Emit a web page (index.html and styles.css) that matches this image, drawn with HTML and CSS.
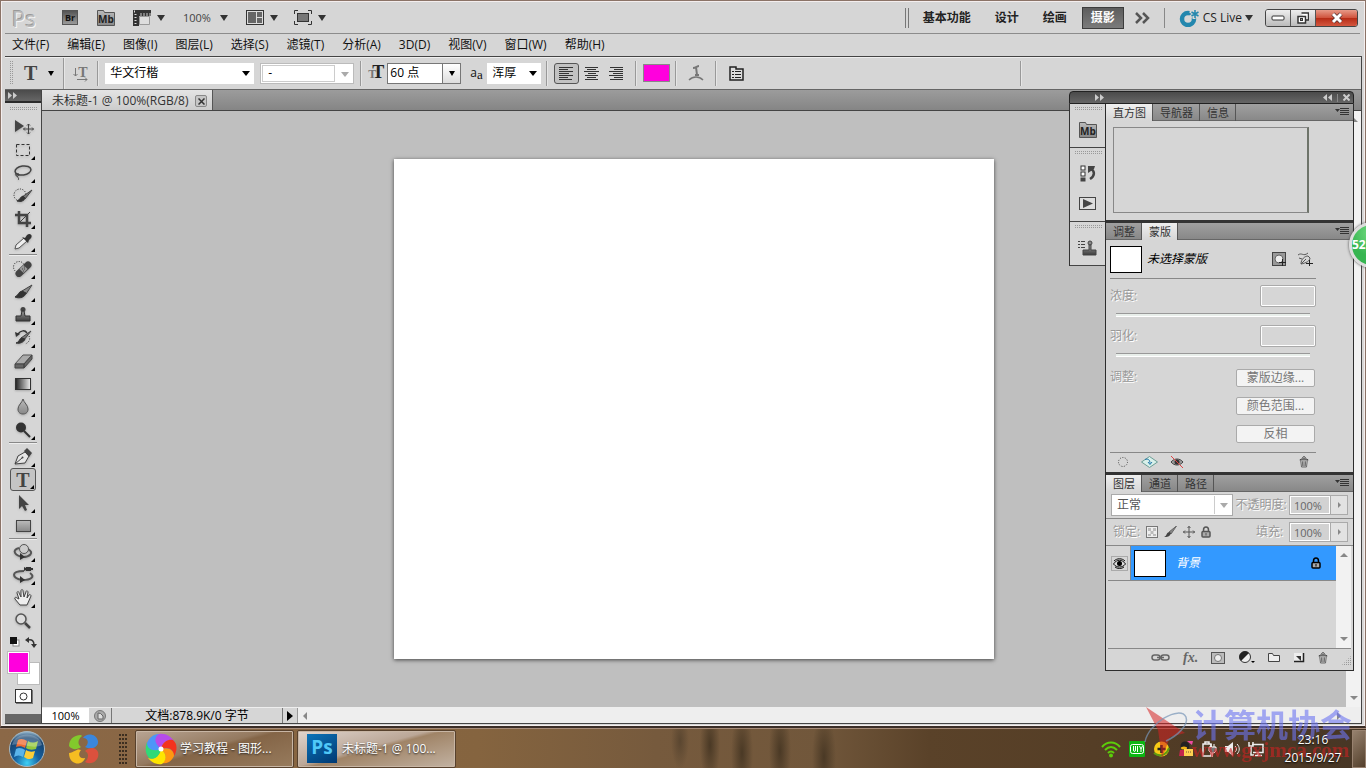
FILE: index.html
```html
<!DOCTYPE html>
<html lang="zh-CN">
<head>
 <meta charset="UTF-8">
 <meta name="viewport" content="width=device-width">
 <title>未标题-1 @ 100%(RGB/8)</title>
 <link rel="stylesheet" href="styles.css">
</head>
<body>
<svg class="defs" aria-hidden="true">
  <defs>
    <linearGradient id="gv" x1="0" y1="0" x2="0" y2="1"><stop offset="0" stop-color="#999"/><stop offset="1" stop-color="#3c3c3c"/></linearGradient>
    <linearGradient id="gl" x1="0" y1="0" x2="0" y2="1"><stop offset="0" stop-color="#bbb"/><stop offset="1" stop-color="#888"/></linearGradient>
    <linearGradient id="gh"><stop offset="0" stop-color="#222"/><stop offset="1" stop-color="#eee"/></linearGradient>
    <radialGradient id="orb" cx=".5" cy=".9" r=".9"><stop offset="0" stop-color="#3fd0f5"/><stop offset=".4" stop-color="#1560a0"/><stop offset=".8" stop-color="#16426e"/><stop offset="1" stop-color="#9dbdd2"/></radialGradient>
    <symbol id="menu" viewBox="0 0 14 10"><path d="M0 2h5l-2.500 3z" fill="#333"/><path d="M5 1.500h9M5 3.500h9M5 5.500h9M5 7.500h9" stroke="#333"/></symbol>
    <symbol id="trash" viewBox="0 0 12 14"><path d="M2 5l1 8h6l1-8M4 6l.5 6M6 6v6M8 6l-.5 6" fill="none" stroke="#555"/><path d="M1 4.500c1-2 9-2 10 0zM4 2c1-2 3-2 4 0" fill="#aaa" stroke="#444"/></symbol>
    <symbol id="lock" viewBox="0 0 12 12"><path d="M3.500 6V4c0-4 5-4 5 0v2" fill="none" stroke="currentColor" stroke-width="1.500"/><rect x="2" y="5.500" width="8" height="5.500" rx="1" fill="#aaa" stroke="currentColor" stroke-width="1.500"/><path d="M6 7v2.500" stroke="currentColor"/></symbol>
    <symbol id="mb" viewBox="0 0 18 16"><path d="M.5 15.500V.5h6l1 2h10v13z" fill="url(#gl)" stroke="#555"/><text x="9" y="12.500" text-anchor="middle" font-size="10" font-weight="bold" fill="#222">Mb</text></symbol>
  </defs>
</svg>

<div class="app">
  <header class="appbar">
    <span class="pslogo">Ps</span>
    <button class="br" aria-label="Bridge">Br</button>
    <button class="flat mbbtn" aria-label="Mini Bridge"><svg width="18" height="16"><use href="#mb"/></svg></button>
    <button class="flat film" aria-label="查看额外内容"><svg width="18" height="16"><path d="M0 0h18v6H6v10H0z" fill="#333"/><path d="M6.500 6.500h10v8h-10z" fill="#ddd" stroke="#999"/><path d="M8 3v3M11 3v3M14 3v3M17 3v3" stroke="#ccc"/><path d="M1 1.500h3M2.500 4v11" stroke="#ddd" stroke-width="2" stroke-dasharray="1 2"/></svg><i class="tri"></i></button>
    <button class="flat zoomlvl">100%<i class="tri"></i></button>
    <button class="flat arrange" aria-label="排列文档"><svg width="18" height="16"><rect x=".5" y=".5" width="17" height="14" fill="#ddd" stroke="#333"/><path d="M2 2h8v11H2zM11 2h5v5h-5zM11 8h5v5h-5z" fill="#666"/></svg><i class="tri"></i></button>
    <button class="flat" aria-label="屏幕模式"><svg width="18" height="16"><rect x="3.500" y="3.500" width="11" height="8" fill="#777" stroke="#333"/><path d="M.5 4V.5H4M14 .5h3.500V4M17.500 11v3.500H14M4 14.500H.5V11" fill="none" stroke="#333"/></svg><i class="tri"></i></button>
    <nav class="spaces">
      <button>基本功能</button><button>设计</button><button>绘画</button><button class="on">摄影</button>
      <button class="more" aria-label="更多"><svg width="15" height="12"><path d="M1 1l5 5-5 5M8 1l5 5-5 5" fill="none" stroke="#555" stroke-width="2.500"/></svg></button>
    </nav>
    <button class="flat cslive"><svg width="20" height="18"><circle cx="9" cy="10" r="6" fill="none" stroke="#2387ae" stroke-width="4.500"/><path d="M15 0v10M11 2l8 6M19 2l-8 6" stroke="#d6d6d6" stroke-width="3"/><path d="M16 1v8M12.500 3l7 4M19.500 3l-7 4" stroke="#2387ae" stroke-width="1.500"/></svg>CS Live<i class="tri"></i></button>
    <div class="winbtns">
      <button aria-label="最小化"><svg width="14" height="8"><rect x="1" y="2" width="12" height="4" rx="1" fill="#fff" stroke="#333"/></svg></button>
      <button aria-label="还原"><svg width="12" height="12"><path d="M4.500 1h7v7h-3M1 4.500h7.500v6.500H1z" fill="#fff" stroke="#333" stroke-width="1.500"/><rect x="3.500" y="6.500" width="2" height="2" fill="#999" stroke="#333"/></svg></button>
      <button class="close" aria-label="关闭"><svg width="14" height="12"><path d="M3 2l8 8M11 2l-8 8" stroke="#533" stroke-width="4.500"/><path d="M3 2l8 8M11 2l-8 8" stroke="#fff" stroke-width="3"/></svg></button>
    </div>
  </header>

  <nav class="menubar">
    <a href="#">文件(F)</a><a href="#">编辑(E)</a><a href="#">图像(I)</a><a href="#">图层(L)</a><a href="#">选择(S)</a><a href="#">滤镜(T)</a><a href="#">分析(A)</a><a href="#">3D(D)</a><a href="#">视图(V)</a><a href="#">窗口(W)</a><a href="#">帮助(H)</a>
  </nav>

  <div class="frame">
  <div class="options">
    <span class="vgrip"></span>
    <button class="flat typebtn" aria-label="文字工具"><b>T</b><i class="tri small"></i></button>
    <i class="rule tall"></i>
    <button class="flat orient" aria-label="切换文本取向"><svg width="18" height="20"><text x="11" y="14" text-anchor="middle" fill="#777">T</text><path d="M3.500 5v8M1.500 11l2 2 2-2M5 16.500h10M13 14.500l2 2-2 2" fill="none" stroke="#777"/></svg></button>
    <i class="rule"></i>
    <span class="sel family"><select aria-label="字体"><option>华文行楷</option></select></span>
    <span class="sel fstyle"><select aria-label="字体样式" disabled><option>-</option></select></span>
    <i class="rule"></i>
    <span class="tt"><small>T</small>T</span>
    <span class="size"><input type="text" value="60 点" aria-label="字号"><button aria-label="选择字号"><i class="tri small"></i></button></span>
    <span class="aa">a<small>a</small></span>
    <span class="sel anti"><select aria-label="消除锯齿"><option>浑厚</option></select></span>
    <i class="rule"></i>
    <div class="aligns">
      <button class="on" aria-label="左对齐"><svg width="15" height="14"><path d="M0 1.500h14M0 3.500h9M0 5.500h14M0 7.500h10M0 9.500h14M0 11.500h9M0 13.500h13" stroke="#333"/></svg></button>
      <button aria-label="居中"><svg width="15" height="14"><path d="M1 1.500h13M3 3.500h9M0 5.500h15M4 7.500h8M1 9.500h13M3 11.500h9M1 13.500h13" stroke="#333"/></svg></button>
      <button aria-label="右对齐"><svg width="15" height="14"><path d="M1 1.500h13M5 3.500h9M0 5.500h14M4 7.500h10M0 9.500h14M5 11.500h9M1 13.500h13" stroke="#333"/></svg></button>
    </div>
    <i class="rule"></i>
    <button class="color" aria-label="文本颜色"></button>
    <i class="rule"></i>
    <button class="flat warp" aria-label="变形文字"><svg width="16" height="18"><path d="M5 4c3 0 4-2 6-2M8 3l1 8M7 11h4" fill="none" stroke="#777" stroke-width="2"/><path d="M1 16c4-4 10-4 14 0" fill="none" stroke="#777" stroke-width="1.500"/></svg></button>
    <i class="rule"></i>
    <button class="flat" aria-label="字符面板"><svg width="15" height="15"><path d="M1 14V1h6v2h7v11z" fill="#ddd" stroke="#222" stroke-width="1.500"/><path d="M3 5.500h2M6 5.500h6M3 8.500h2M6 8.500h6M3 11.500h2M6 11.500h6" stroke="#222"/></svg></button>
    <i class="rule far"></i>
  </div>

  <div class="main">
    <aside class="tools">
      <div class="dhead"><svg width="9" height="7"><path d="M0 0l4 3.500L0 7zM5 0l4 3.500L5 7z" fill="#ccc"/></svg></div>
      <div class="tbody">
        <i class="grip"></i>
        <button aria-label="移动"><svg viewBox="0 0 22 20"><path d="M3 3v12l9-6z" fill="#444"/><path d="M16.500 7v10M11.500 12h10M15 8.500l1.500-1.500L18 8.500M15 15.500l1.500 1.500 1.500-1.500M13 10.500L11.500 12l1.500 1.500M20 10.500l1.500 1.500-1.500 1.500" fill="none" stroke="#444"/></svg></button>
        <button class="sub" aria-label="选框"><svg viewBox="0 0 22 20"><rect x="4.500" y="4.500" width="13" height="11" fill="none" stroke="#333" stroke-dasharray="3 2"/></svg></button>
        <button class="sub" aria-label="套索"><svg viewBox="0 0 22 20"><ellipse cx="11" cy="7.500" rx="8" ry="4.500" transform="rotate(-8 11 7.500)" fill="none" stroke="#444" stroke-width="1.500"/><path d="M4 10c-2 3 2 4 3 2s-4-2-2 1 2 3 1 4" fill="none" stroke="#444"/></svg></button>
        <button class="sub" aria-label="快速选择"><svg viewBox="0 0 22 20"><circle cx="8" cy="9" r="6" fill="none" stroke="#222" stroke-dasharray="1 1.500"/><path d="M20 4l-7 9-3-2z" fill="#777" stroke="#444"/><path d="M13 12c-1 3-4 4-8 3 3-1 3-4 6-5z" fill="#333" stroke="#333"/></svg></button>
        <button class="sub" aria-label="裁剪"><svg viewBox="0 0 22 20"><path d="M7 2v12h12M3 6h12v12" fill="none" stroke="#444" stroke-width="2.500"/><path d="M7 14L18 3" stroke="#444"/></svg></button>
        <button class="sub" aria-label="吸管"><svg viewBox="0 0 22 20"><path d="M3 17l1-4 8-7 3 3-8 7z" fill="#eee" stroke="#555"/><path d="M10 5l6 6 1-3c5-3 2-8-2-5l-2 3z" fill="#333"/></svg></button>
        <hr>
        <button class="sub" aria-label="修复画笔"><svg viewBox="0 0 22 20"><circle cx="7" cy="8" r="5.500" fill="none" stroke="#222" stroke-dasharray="1 1.500"/><path d="M7 14.500l9-8.500" stroke="#444" stroke-width="7" stroke-linecap="round"/><path d="M9.500 12l4-4" stroke="#999" stroke-width="6"/><path d="M10 10h1M12 10h1M11 12h1M12 8h1" stroke="#444"/></svg></button>
        <button class="sub" aria-label="画笔"><svg viewBox="0 0 22 20"><path d="M20 3l-6 9-4-3z" fill="#888" stroke="#444"/><path d="M14 11c-1 4-6 6-11 4 4-2 3-5 7-6z" fill="#333" stroke="#333"/></svg></button>
        <button class="sub" aria-label="仿制图章"><svg viewBox="0 0 22 20"><circle cx="11" cy="4.500" r="2.500" fill="#444"/><path d="M10 6h2l1 5h5v5H4v-5h5z" fill="url(#gv)" stroke="#333"/></svg></button>
        <button class="sub" aria-label="历史记录画笔"><svg viewBox="0 0 22 20"><path d="M19 3l-7 9-3-2z" fill="#777" stroke="#444"/><path d="M13 11c-1 3-5 5-9 4 4-1 3-5 6-5z" fill="#333" stroke="#333"/><path d="M6 6c3-4 7-4 9-1" fill="none" stroke="#333" stroke-width="1.500"/><path d="M3 4l1 5 4-3z" fill="#333"/><path d="M17 8c2 4-1 7-4 8" fill="none" stroke="#333" stroke-dasharray="1 1.500"/></svg></button>
        <button class="sub" aria-label="橡皮擦"><svg viewBox="0 0 22 20"><path d="M3 13l8-9h9l-8 9z" fill="#aaa" stroke="#555"/><path d="M3 13h9v4H3zM12 13l8-9v4l-8 9z" fill="#666" stroke="#444"/></svg></button>
        <button class="sub" aria-label="渐变"><svg viewBox="0 0 22 20"><rect x="3.500" y="4.500" width="15" height="11" fill="url(#gh)" stroke="#333"/></svg></button>
        <button class="sub" aria-label="模糊"><svg viewBox="0 0 22 20"><path d="M11 2c1 4 5 6 5 10s-3 5-5 5-5-1-5-5 4-6 5-10z" fill="url(#gl)" stroke="#555"/></svg></button>
        <button class="sub" aria-label="加深"><svg viewBox="0 0 22 20"><circle cx="9" cy="7.500" r="5" fill="#333"/><path d="M12 11l6 6" stroke="#333" stroke-width="2"/></svg></button>
        <hr>
        <button class="sub" aria-label="钢笔"><svg viewBox="0 0 22 20"><path d="M3 17l3-8 7-4 4 4-4 7z" fill="#e6e6e6" stroke="#444"/><path d="M3 17l7-6" stroke="#444"/><circle cx="10.500" cy="10.500" r="1" fill="#444"/><path d="M12 4l3-3 5 5-3 4z" fill="#444"/></svg></button>
        <button class="sub on" aria-label="文字"><b>T</b></button>
        <button class="sub" aria-label="路径选择"><svg viewBox="0 0 22 20"><path d="M7 2v14l3-3 3 5 2-1-2-5h4z" fill="#444"/></svg></button>
        <button class="sub" aria-label="矩形"><svg viewBox="0 0 22 20"><rect x="4.500" y="4.500" width="14" height="11" fill="url(#gl)" stroke="#444"/></svg></button>
        <hr class="slim">
        <button class="sub" aria-label="3D 旋转"><svg viewBox="0 0 22 20"><path d="M7 6c-8 2-4 8 4 9M16 7c7 4 1 8-5 8" fill="none" stroke="#555" stroke-width="2"/><path d="M8 11l5 4-5 3z" fill="#333"/><circle cx="12" cy="7" r="4.500" fill="#ccc" stroke="#555"/></svg></button>
        <button class="sub" aria-label="3D 相机"><svg viewBox="0 0 22 20"><path d="M12 6C-2 6 0 13 10 15M18 8c6 4 0 7-7 7" fill="none" stroke="#555" stroke-width="2"/><path d="M8 11l5 4-5 3zM14 2h5v4h-5zM12 2l2 1v2l-2 1zM19 3h2v2h-2z" fill="#333"/></svg></button>
        <button class="sub" aria-label="抓手"><svg viewBox="0 0 22 20"><path d="M8 17L3 11c-1-2 1-2 2-1l2 1-2-6c0-2 2-2 2 0l2 4V3c0-2 2-2 2 0l1 6 2-5c0-2 2-1 2 0l-1 6 2-3c1-1 2 0 2 1l-4 9z" fill="#eee" stroke="#444"/></svg></button>
        <button aria-label="缩放"><svg viewBox="0 0 22 20"><circle cx="9" cy="8" r="5" fill="#ddd" stroke="#555" stroke-width="1.500"/><path d="M13 12l5 5" stroke="#444" stroke-width="2.500"/></svg></button>
        <div class="swap"><svg width="10" height="10"><rect x="3" y="3" width="6" height="6" fill="#fff" stroke="#888"/><rect width="7" height="7" fill="#111"/></svg><svg width="12" height="11"><path d="M3 3c4-1 6 1 6 5" fill="none" stroke="#333" stroke-width="1.500"/><path d="M0 3l4-3v6zM6 7h6l-3 4z" fill="#333"/></svg></div>
        <div class="fgbg"><button class="bg" aria-label="背景色"></button><button class="fg" aria-label="前景色"></button></div>
        <button class="qmask" aria-label="快速蒙版"><svg width="9" height="9"><circle cx="4.500" cy="4.500" r="3.500" fill="#fff" stroke="#333"/></svg></button>
      </div>
    </aside>

    <section class="doc">
      <div class="doctabs"><div class="doctab">未标题-1 @ 100%(RGB/8)<button aria-label="关闭文档"><svg width="7" height="7"><path d="M.5.5l6 6M6.500.5l-6 6" stroke="#333" stroke-width="1.500"/></svg></button></div></div>
      <div class="view">
        <div class="stage"><div class="paper"></div></div>
        <div class="vscroll"><i class="up"></i><i class="down"></i></div>
      </div>
      <footer class="status">
        <input type="text" class="pct" value="100%" aria-label="缩放比例">
        <span class="ver"><svg width="12" height="12"><circle cx="6" cy="6" r="5.500" fill="#aaa" stroke="#777"/><path d="M4 3v6h5V6L6.500 3.500z" fill="#ddd" stroke="#666"/></svg></span>
        <span class="info">文档:878.9K/0 字节</span>
        <button class="flat play" aria-label="显示"><svg width="6" height="10"><path d="M0 0l6 5-6 5z"/></svg></button>
        <div class="hscroll"><i class="left"></i><i class="right"></i></div>
      </footer>
    </section>

    <div class="dock">
      <div class="dhead"><svg class="first" width="9" height="7"><path d="M0 0l4 3.500L0 7zM5 0l4 3.500L5 7z" fill="#ccc"/></svg><svg width="9" height="7"><path d="M4 0L0 3.500 4 7zM9 0L5 3.500 9 7z" fill="#ccc"/></svg><i></i><svg width="7" height="7"><path d="M.5.5l6 6M6.500.5l-6 6" stroke="#ccc" stroke-width="2"/></svg></div>
      <div class="cols">
        <div class="icons">
          <div class="grp"><i class="grip"></i><button aria-label="Mini Bridge"><svg width="18" height="16"><use href="#mb"/></svg></button></div>
          <div class="grp"><i class="grip"></i>
            <button aria-label="历史记录"><svg width="16" height="17"><rect x="1" y="1" width="4" height="4" fill="#fff" stroke="#333"/><rect x="1" y="7" width="4" height="4" fill="#fff" stroke="#333"/><path d="M.5 12.500h5v4h-5z" fill="#444"/><path d="M11 4c4 2 4 7-1 10" fill="none" stroke="#444" stroke-width="2.500"/><path d="M8 1h7l-1 3-6 4z" fill="#444"/></svg></button>
            <button aria-label="动作"><svg width="18" height="14"><rect x=".5" y=".5" width="16" height="12" fill="#ddd" stroke="#444"/><path d="M4 2l10 4.500L4 11z" fill="#444"/></svg></button></div>
          <div class="grp"><i class="grip"></i><button aria-label="仿制源"><svg width="19" height="16"><path d="M0 1.500h2M3 1.500h4M0 4.500h2M3 4.500h4M0 7.500h2M3 7.500h4" stroke="#444"/><circle cx="12" cy="3" r="2" fill="#888" stroke="#444"/><path d="M11 5h2v5h5v5H5v-5h6z" fill="url(#gv)" stroke="#444"/></svg></button></div>
        </div>
        <div class="panels">
          <section class="panel histo">
            <div class="tabs"><button class="on">直方图</button><button>导航器</button><button>信息</button><svg width="14" height="10"><use href="#menu"/></svg></div>
            <div class="graph"></div>
          </section>
          <section class="panel masks">
            <div class="tabs"><button>调整</button><button class="on">蒙版</button><svg width="14" height="10"><use href="#menu"/></svg></div>
            <div class="mbody">
              <div class="mhead"><span class="thumb"></span><em>未选择蒙版</em>
                <svg width="15" height="15"><rect x=".5" y=".5" width="13" height="13" fill="#999" stroke="#444"/><circle cx="7" cy="7" r="4" fill="#eee" stroke="#666"/><path d="M10.500 7v7M7 10.500h7" stroke="#222"/></svg>
                <svg width="15" height="15"><path d="M0 3c4-3 5 2 10-2M3 12c0-5 4-8 7-8l2 2c0 3-4 5-9 6zM3 12l5-5M1 6l3 1" fill="none" stroke="#555"/><path d="M11.500 8v6M8 11.500h7" stroke="#222"/></svg></div>
              <div class="prop"><label for="dens">浓度:</label><input id="dens" type="text" disabled></div>
              <input type="range" aria-label="浓度" disabled>
              <div class="prop"><label for="feat">羽化:</label><input id="feat" type="text" disabled></div>
              <input type="range" aria-label="羽化" disabled>
              <div class="refine"><span>调整:</span><div><button disabled>蒙版边缘...</button><button disabled>颜色范围...</button><button disabled>反相</button></div></div>
              <div class="mfoot">
                <svg width="12" height="12"><circle cx="6" cy="6" r="4.500" fill="none" stroke="#444" stroke-dasharray="1 1.500"/></svg>
                <svg width="17" height="12"><path d="M8.500.5l8 5.500-8 5.500L.5 6z" fill="#d9f0ea" stroke="#6a9c94"/><path d="M4 3.500c3-1 5 0 5 4M7 6l2 2.500L11 6" fill="none" stroke="#2277aa"/></svg>
                <svg width="14" height="12"><path d="M1 6c3-4 9-4 12 0-3 4-9 4-12 0z" fill="#999" stroke="#444"/><circle cx="7" cy="6" r="2.500" fill="#333"/><path d="M1 0l12 12" stroke="#d44"/></svg>
                <svg class="end" width="10" height="12"><use href="#trash"/></svg>
              </div>
            </div>
          </section>
          <section class="panel layers">
            <div class="tabs"><button class="on">图层</button><button>通道</button><button>路径</button><svg width="14" height="10"><use href="#menu"/></svg></div>
            <div class="lrow"><span class="sel blend"><select aria-label="混合模式" disabled><option>正常</option></select></span><label for="op">不透明度:</label><span class="num"><input id="op" type="text" value="100%" disabled><button aria-label="不透明度滑块" disabled></button></span></div>
            <div class="lrow"><span class="dim lk">锁定:</span>
              <svg width="12" height="12"><rect x=".5" y=".5" width="11" height="11" fill="#eee" stroke="#777"/><path d="M2 2h3v3H2zM7 2h3v3H7zM4.500 5h3v3h-3zM2 8h3v2H2zM7 8h3v2H7z" fill="#bbb"/></svg>
              <svg width="13" height="12"><path d="M12.500 0L7 8 5 6z" fill="#888" stroke="#666"/><path d="M7 7c-1 4-4 4-7 4 3-1 2-4 5-5z" fill="#444"/></svg>
              <svg width="12" height="12"><path d="M6 0v12M0 6h12M4.500 2L6 .5 7.500 2M4.500 10L6 11.500 7.500 10M2 4.500L.5 6 2 7.500M10 4.500L11.500 6 10 7.500" fill="none" stroke="#555"/></svg>
              <svg class="lk2" width="12" height="12"><use href="#lock"/></svg>
              <label for="fill" class="push">填充:</label><span class="num"><input id="fill" type="text" value="100%" disabled><button aria-label="填充滑块" disabled></button></span></div>
            <div class="list">
              <div class="rows"><div class="layer">
                <button class="eye" aria-label="可见性"><svg width="13" height="11"><path d="M.5 6c3-5 9-5 12 0-3 4-9 4-12 0z" fill="#ddd" stroke="#111"/><circle cx="6.500" cy="5.500" r="2.500"/><path d="M1 3c3-3 8-3 11 0M2 9c2 2 7 2 9 0" fill="none" stroke="#111"/></svg></button>
                <div class="lname"><span class="thumb"></span><em>背景</em><svg width="12" height="12"><use href="#lock"/></svg></div>
              </div></div>
              <div class="lscroll"><i class="up"></i><i class="down"></i></div>
            </div>
            <div class="lfoot">
              <svg width="19" height="10"><rect x="1" y="2" width="8" height="5" rx="2.500" fill="none" stroke="#666" stroke-width="1.500"/><rect x="10" y="2" width="8" height="5" rx="2.500" fill="none" stroke="#666" stroke-width="1.500"/><path d="M6 4.500h7" stroke="#666" stroke-width="1.500"/></svg>
              <span class="fx">fx.</span>
              <svg width="15" height="12"><rect x=".5" y=".5" width="13" height="11" fill="#bbb" stroke="#555"/><circle cx="7" cy="6" r="3.500" fill="#eee" stroke="#777"/></svg>
              <svg width="16" height="13"><circle cx="6" cy="6" r="5.500" fill="#eee" stroke="#333"/><path d="M10 2L2 10A5.500 5.500 0 0 1 10 2z" fill="#222"/><path d="M12 10h4l-2 2z"/></svg>
              <svg width="12" height="10"><path d="M.5 8.500v-8h4l1 2h6v6z" fill="#eee" stroke="#444"/></svg>
              <svg width="12" height="11"><path d="M1 1h9v8H1z" fill="#eee"/><path d="M1 9.500h9.500V1" fill="none" stroke="#222" stroke-width="1.500"/><path d="M3 4h5v5z" fill="#333"/></svg>
              <svg width="10" height="12"><use href="#trash"/></svg>
              <i class="resize"></i>
            </div>
          </section>
        </div>
      </div>
    </div>
  </div>
  </div>
  <div class="speed">52</div>
</div>

<div class="taskbar">
  <button class="start" aria-label="开始"><svg width="38" height="38"><circle cx="19" cy="19" r="17.500" fill="url(#orb)" stroke="#a5b9c4"/><path d="M10 10c3-2 6-1 9 1l-2 7c-3-2-6-2-9-1z" fill="#ee6a30"/><path d="M20 11c3 2 6 2 10 0l-2 8c-4 1-7 1-10-1z" fill="#94c83d"/><path d="M8 19c3-2 6-1 9 1l-2 7c-3-2-6-2-9 0z" fill="#5ab4ea"/><path d="M18 20c3 2 6 2 9 1l-2 7c-4 2-6 1-9-1z" fill="#fccd38"/><path d="M4 15C7 1 31 1 34 15 24 20 14 12 4 15z" fill="#fff" opacity=".25"/></svg></button>
  <button class="quick" aria-label="浏览器"><svg width="30" height="30"><path d="M12 1C4 1 0 6 0 12c3 4 8 4 12 1-3-2-4-7 1-11z" fill="#82c92c"/><path d="M14 4c6 0 6 6 2 9 5 3 14 1 13-6C27-1 17-1 14 4z" fill="#3b87dc"/><path d="M0 19c0 13 14 13 16 5-5 1-8-3-4-8-4-2-6 2-12 3z" fill="#f5bd22"/><path d="M29 18c-3-6-9-4-13-1 4 2 4 7 0 11 8 4 15-3 13-10z" fill="#dc513d"/></svg></button>
  <span class="dots"></span>
  <button class="task"><svg width="32" height="32" viewBox="-16 -16 32 32"><path d="M0 0C-8-5-10-13-2-15 5-16 10-12 13-8 8-10 2-8 0 0z" fill="#b64bea"/><path d="M0 0C2-9 9-10 12-9 17-5 16 2 13 7 13 1 8-3 0 0z" fill="#f3331d"/><path d="M0 0C9-2 13 2 13 7 10 13 6 15 1 14 6 11 6 5 0 0z" fill="#ff9711"/><path d="M0 0C7 6 5 12 1 15-5 16-10 13-13 9-7 11-2 8 0 0z" fill="#ffe500"/><path d="M0 0C-2 9-8 11-12 9-16 4-16-1-14-7-13-1-8 3 0 0z" fill="#30d977"/><path d="M0 0C-8 3-14 0-14-6-12-11-8-15-2-15-8-11-6-5 0 0z" fill="#4c96f8"/><circle r="2.500" fill="#fff"/></svg>学习教程 - 图形...</button>
  <button class="task lit"><span class="psicon">Ps</span>未标题-1 @ 100...</button>
  <div class="tray">
    <svg width="20" height="18"><path d="M1 7c5-6 13-6 18 0M4 10c4-4 8-4 12 0M7 13c2-2 4-2 6 0" fill="none" stroke="#5cce0a" stroke-width="2"/><circle cx="10" cy="15.500" r="2" fill="#5cce0a"/></svg>
    <svg width="16" height="16"><rect width="16" height="16" rx="1" fill="#0db613"/><rect x="1.500" y="3.500" width="13" height="9" rx="2" fill="none" stroke="#fff"/><path d="M4.500 5v4c0 2 2 2 2 0V5M8.500 5v6M10.500 5l1.500 3 1.500-3M12 8v3" fill="none" stroke="#fff"/></svg>
    <svg width="17" height="16"><circle cx="8.500" cy="8" r="7.500" fill="#f7c915"/><path d="M1 12C9 18 15 11 16 7" fill="none" stroke="#5f9b11" stroke-width="2"/><path d="M8.500 4v8M4.500 8h8" stroke="#222" stroke-width="2.500"/></svg>
    <svg width="16" height="17"><circle cx="7" cy="6" r="4.500" fill="#222"/><ellipse cx="6" cy="8" rx="3" ry="1.500" fill="#f3b615"/><path d="M2 10l10 0-2 6H1z" fill="#c2264d"/><path d="M6 9h9v7H6z" fill="#ffd051"/><path d="M8 12h1M10 12h1M12 12h1" stroke="#753"/><path d="M9 1l5 4 1-4z" fill="#ef4ba2"/></svg>
    <svg width="15" height="16"><path d="M1 3h8v12H1zM3 1h4v2H3z" fill="none" stroke="#eee" stroke-width="1.500"/><path d="M7 6h7v4l-2 2H9L7 10zM9 3v3M12 3v3M10.500 12v4" fill="#777" stroke="#fff"/></svg>
    <svg width="15" height="16"><path d="M0 5h3l5-4v14l-5-4H0z" fill="#eee"/><path d="M10 5c2 2 2 4 0 6M12 3c3 3 3 7 0 10" fill="none" stroke="#eee"/></svg>
    <svg width="16" height="16"><path d="M4 3.500h11v8H5M7 14.500h7M10 12v2" fill="#443425" stroke="#eee" stroke-width="1.500"/><path d="M1 1v4h4V1M3 5v9h3" fill="none" stroke="#eee" stroke-width="1.500"/></svg>
    <div class="clock">23:16<br>2015/9/27</div>
    <button class="peek" aria-label="显示桌面"></button>
  </div>
  <div class="mark"><svg width="48" height="56"><path d="M2 1l39 26-15 4-8 21-4-28z" fill="#d52222" opacity=".55"/><path d="M1 36C4 17 36-1 42 11c3 8-9 19-20 24" fill="none" stroke="#7895b8" stroke-width="1.500" opacity=".7"/></svg><div><b>计算机协会</b><span>www.gxjmca.com</span></div></div>
</div>
</body>
</html>
```
FILE: styles.css
```css
* { box-sizing: border-box; }
body { margin: 0; height: 100vh; display: flex; flex-direction: column; overflow: hidden;
  background: #6a5037; color: #222; font: 12px/16px "Open Sans", "Noto Sans CJK SC", sans-serif; }
button, input, select { font: inherit; color: inherit; margin: 0; padding: 0; border-radius: 0; }
button { border: 0; background: none; display: flex; align-items: center; justify-content: center; }
a { color: inherit; text-decoration: none; }
svg { display: block; flex: none; }
svg text { font-family: "Open Sans", sans-serif; }
.defs { position: absolute; width: 0; height: 0; }

.app { flex: 1; min-height: 0; display: flex; flex-direction: column; position: relative;
  background: #d6d6d6; border: 1px solid #8b7367; border-bottom: 2px solid #3a2d27;
  padding: 1px 3px 2px 4px; box-shadow: inset 0 0 0 1px #f4eeee; }
.tri { width: 0; height: 0; border: 4px solid transparent; border-top: 6px solid #333; border-bottom: 0; }
.tri.small { border-width: 5px 3px 0; border-top-color: #000; }

/* application bar */
.appbar { height: 32px; flex: none; display: flex; align-items: center; padding: 0 2px 0 7px;
  border-bottom: 1px solid #8c8c8c; margin-right: 2px; }
.pslogo { width: 50px; font-size: 22px; line-height: 28px; color: #bbb; text-shadow: 1px 1px #f5f5f5, -1px -1px #999; }
.br { width: 16px; height: 15px; background: linear-gradient(#555, #999); border: 1px solid #555;
  font-size: 9px; font-weight: bold; color: #111; }
.flat { gap: 6px; }
.mbbtn { margin: 0 18px 0 19px; }
.film { margin-right: 18px; }
.zoomlvl { gap: 9px; font-size: 11px; color: #444; margin-right: 18px; }
.arrange { margin-right: 16px; }
.spaces { margin-left: auto; display: flex; align-items: center; height: 20px; padding-left: 5px;
  border-left: 1px solid #777; box-shadow: inset 2px 0 #d6d6d6, inset 3px 0 #777; font-weight: bold; }
.spaces button { padding: 0 12px; height: 22px; }
.spaces .on { background: linear-gradient(#5d5d5d, #7b7b7b); color: #fff; border: 1px solid #3c3c3c; padding: 0 8px; margin: 0 3px; }
.spaces .more { padding: 0 8px; }
.cslive { gap: 3px; margin-left: 6px; padding: 0 12px 0 14px; border-left: 1px solid #888; height: 20px; }
.cslive svg { margin-right: 1px; }
.winbtns { display: flex; height: 18px; border: 1px solid #444; border-radius: 3px; overflow: hidden; }
.winbtns button { width: 25px; background: linear-gradient(#eee, #bbb); border-right: 1px solid #555; }
.winbtns .close { width: 41px; border: 0; background: linear-gradient(#e79a88, #d0543e 48%, #b52b15 50%, #d4573f); }

.menubar { height: 22px; flex: none; display: flex; align-items: center; gap: 18px; padding-left: 7px; color: #111; }

.frame { flex: 1; min-height: 0; display: flex; flex-direction: column; border: 1px solid #444; border-left: 0; }

/* options bar */
.options { height: 33px; flex: none; display: flex; align-items: center; padding-left: 4px; border-bottom: 1px solid #666;
  box-shadow: inset 0 1px #eee; }
.vgrip { width: 4px; height: 24px; background: conic-gradient(#999 25%, transparent 0) 0 0 / 2px 2px; }
.rule { width: 1px; height: 25px; background: #999; box-shadow: 1px 0 #e6e6e6; }
.rule.tall { height: 31px; }
.rule.far { margin-left: 276px; }
.typebtn { gap: 11px; padding: 0 9px 0 11px; }
.typebtn b, .tools b { font: bold 20px/20px "Liberation Serif", serif; color: #444; }
.orient { width: 33px; }
.orient text { font: bold 14px "Liberation Serif", serif; }
.sel { position: relative; display: flex; background: #fff; height: 21px; }
.sel select { appearance: none; width: 100%; border: 0; background: none; padding-left: 5px; color: #000; opacity: 1; }
.sel::after { content: ""; position: absolute; right: 4px; top: 8px; border: 4px solid transparent;
  border-top: 5px solid #000; border-bottom: 0; pointer-events: none; }
.family { width: 149px; margin: 0 6px 0 7px; }
.fstyle { width: 94px; margin-right: 6px; border: 1px solid #bbb; box-shadow: inset 0 0 0 1px #fff, inset -18px 0 #fff, inset -19px 0 #ccc, inset 0 0 0 2px #ccc; }
.fstyle select { padding-left: 7px; }
.fstyle::after, .blend::after { border-top-color: #aaa; }
.tt { width: 26px; padding-left: 7px; font: bold 18px/20px "Liberation Serif", serif; white-space: nowrap; }
.tt small { font-size: 12px; color: #777; margin-right: -4px; }
.size { display: flex; height: 21px; }
.size input { width: 55px; border: 1px solid #777; border-right: 0; padding: 0 2px; background: #fff; color: #000; }
.size button { width: 19px; border: 1px solid #777; background: linear-gradient(#fff, #ddd); }
.aa { width: 26px; padding-left: 9px; font-size: 12px; white-space: nowrap; color: #111; }
.aa small { font: 13px "Liberation Serif", serif; position: relative; top: 2px; }
.anti { width: 54px; margin-right: 5px; }
.aligns { display: flex; padding: 0 6px 0 7px; }
.aligns button { width: 25px; height: 21px; }
.aligns .on { border: 1px solid #555; border-radius: 3px; background: #c2c2c2; }
.color { width: 27px; height: 18px; background: #f0d; border: 1px solid #888; margin: 0 5px 0 7px; }
.warp { width: 39px; }
.warp + .rule { margin-right: 13px; }

.main { flex: 1; min-height: 0; display: flex; position: relative; }
.dhead { height: 13px; display: flex; align-items: center; background: linear-gradient(#4a4a4a, #666); border-bottom: 2px solid #2b2b2b; }
.grip { display: block; height: 4px; width: 28px; flex: none; background: conic-gradient(#999 25%, transparent 0) 0 0 / 2px 2px; }

/* toolbox */
.tools { width: 37px; flex: none; background: #666; border-right: 1px solid #444; display: flex; flex-direction: column; }
.tools .dhead { padding-left: 3px; }
.tbody { background: #d6d6d6; padding: 4px 5px 11px; display: flex; flex-direction: column; align-items: center; }
.tbody .grip { margin-bottom: 4px; }
.tbody > button { width: 26px; height: 23px; position: relative; flex: none; }
.tbody > button svg { width: 22px; height: 20px; filter: drop-shadow(0 1px 1px #aaa); }
.tbody .sub::after { content: ""; position: absolute; right: 1px; bottom: 1px;
  border: 2px solid #000; border-top-color: transparent; border-left-color: transparent; }
.tbody .on { border: 1px solid #555; border-radius: 3px; background: #c4c4c4; }
.tbody hr { width: 28px; height: 2px; margin: 1px 0; border: 0; border-top: 1px solid #888; border-bottom: 1px solid #eee; flex: none; }
.tbody .slim { margin-bottom: 0; }
.swap { display: flex; justify-content: space-between; width: 27px; margin: 5px 0 4px; }
.fgbg { display: grid; width: 31px; height: 32px; }
.fgbg button { grid-area: 1 / 1; width: 21px; height: 21px; border: 1px solid #fff; outline: 1px solid #bbb; }
.fg { background: #f0d; z-index: 1; }
.bg { background: #fff; justify-self: end; align-self: end; }
.tbody .qmask { width: 17px; height: 14px; margin-top: 5px; background: #fff; border: 1px solid #333; box-shadow: 1px 1px #777; }
.tbody .qmask svg { width: 9px; height: 9px; filter: none; }

/* document */
.doc { flex: 1; min-width: 0; display: flex; flex-direction: column; }
.doctabs { height: 21px; flex: none; display: flex; background: linear-gradient(#9c9c9c, #858585); border-bottom: 1px solid #444; }
.doctab { display: flex; align-items: center; gap: 7px; padding: 2px 5px 0 10px; background: linear-gradient(#e4e4e4, #ccc); border-right: 1px solid #555; color: #333; }
.doctab button { width: 12px; height: 12px; border: 1px solid #888; background: #c6c6c6; border-radius: 2px; }
.view { flex: 1; min-height: 0; display: flex; background: #bfbfbf; }
.stage { flex: 1; display: flex; align-items: center; justify-content: center; }
.paper { width: 600px; height: 500px; background: #fff; box-shadow: 0 1px 4px #444; }
.vscroll, .lscroll { width: 15px; background: #f2f2f2; display: flex; flex-direction: column; justify-content: space-between; align-items: center; padding: 7px 0; }
.up, .down { border: 4px solid transparent; border-bottom: 4px solid #888; border-top: 0; }
.down { border-bottom: 0; border-top: 4px solid #888; }
.status { height: 16px; flex: none; display: flex; background: #d6d6d6; color: #000; border-top: 1px solid #eee; }
.pct { width: 47px; border: 0; background: #fff; text-align: center; font-size: 11px; }
.ver { width: 23px; display: flex; align-items: center; justify-content: center; border-right: 1px solid #777; }
.info { width: 171px; text-align: center; line-height: 16px; border-right: 1px solid #777; }
.play { width: 15px; border-right: 1px solid #999; }
.hscroll { flex: 1; display: flex; align-items: center; justify-content: space-between; padding: 0 20px 0 5px; background: #eee; }
.left, .right { border: 4px solid transparent; border-right: 4px solid #888; border-left: 0; }
.right { border-right: 0; border-left: 4px solid #888; }

/* floating panels */
.dock { position: absolute; top: 1px; right: 7px; width: 285px; }
.dock .dhead { border: 1px solid #222; border-radius: 4px 4px 0 0; gap: 5px; padding: 0 3px 0 25px; }
.dhead .first { margin-right: auto; }
.dhead i { width: 1px; height: 8px; background: #888; }
.cols { display: flex; align-items: flex-start; }
.icons { width: 36px; background: #d6d6d6; border-left: 1px solid #333; }
.grp { border-bottom: 1px solid #444; padding: 3px 4px; display: flex; flex-direction: column; gap: 1px; }
.grp .grip { margin-bottom: 3px; }
.grp button { height: 29px; }
.panels { flex: 1; border: 1px solid #2c2c2c; border-top: 0; background: #d6d6d6; }
.panel { border-bottom: 3px solid #333; }
.panel:last-child { border-bottom: 0; }
.tabs { display: flex; height: 17px; background: linear-gradient(#a0a0a0, #888); border-bottom: 1px solid #666; font-size: 11px; color: #333; align-items: center; }
.tabs button { padding: 2px 6px 0 7px; height: 17px; border-right: 1px solid #555; color: #333; }
.tabs .on { background: linear-gradient(#efefef, #d6d6d6); }
.tabs svg { margin: 0 4px 0 auto; }
.graph { height: 86px; width: 196px; margin: 6px 0 7px 7px; border: 1px solid #888; border-right: 2px solid #6e746a; }
.mbody { width: 210px; padding-left: 4px; }
.thumb { width: 32px; height: 27px; background: #fff; border: 1px solid #000; flex: none; }
.mhead { height: 39px; display: flex; align-items: center; gap: 11px; border-bottom: 1px solid #888; padding-right: 3px; }
.mhead em { margin: 0 auto 0 -6px; color: #000; }
.prop { height: 34px; display: flex; align-items: center; justify-content: space-between; }
.prop label, .refine span, .lrow { color: #999; text-shadow: 1px 1px #fff; }
.prop input { width: 56px; height: 22px; border: 1px solid #aaa; background: none; border-radius: 2px; box-shadow: inset 0 0 0 1px #fff; }
.mbody input[type=range] { appearance: none; display: block; width: 194px; height: 4px; margin: 0 0 2px 6px; background: #e8eeea; border-top: 1px solid #999; border-bottom: 1px solid #fff; }
.mbody input[type=range]::-webkit-slider-thumb { appearance: none; width: 0; }
.refine { display: flex; justify-content: space-between; padding: 10px 1px 9px 0; border-bottom: 1px solid #888; }
.refine div { display: grid; gap: 10px; width: 79px; }
.refine button { height: 18px; border: 1px solid #aaa; border-radius: 2px; background: #f3f3f3; color: #777; }
.mfoot { height: 19px; display: flex; align-items: center; gap: 12px; padding: 0 7px 2px; }
.mfoot .end { margin-left: auto; }
.lrow { height: 27px; display: flex; align-items: center; justify-content: space-between; padding: 0 5px; border-bottom: 1px solid #888; }
.blend { width: 122px; height: 22px; border: 1px solid #aaa; box-shadow: inset 0 0 0 1px #fff, inset -17px 0 #fff, inset -18px 0 #ccc; }
.blend select { color: #555; }
.num { display: flex; }
.num input { width: 42px; height: 20px; border: 1px solid #aaa; box-shadow: inset 0 0 0 1px #fff; background: #d2d2d2; padding-left: 4px; color: #666; font-size: 11px; }
.num button { width: 17px; height: 20px; border: 1px solid #aaa; border-left: 0; background: #e2e2e2; }
.num button::before { content: ""; border: 3px solid transparent; border-left: 3px solid #888; border-right: 0; }
.lk { margin-left: 2px; }
.lk2 { color: #555; }
.push { margin-left: 38px; }
.list { display: flex; height: 103px; margin: 0 2px; border-bottom: 1px solid #888; }
.rows { flex: 1; }
.layer { display: flex; height: 35px; border-bottom: 1px solid #888; }
.eye { width: 23px; border-right: 1px solid #888; }
.eye svg { outline: 1px solid #aaa; outline-offset: 1px; }
.lname { flex: 1; display: flex; align-items: center; padding: 0 14px 0 3px; gap: 10px; background: #39f; color: #fff; }
.lname em { flex: 1; }
.lname svg { color: #000; }
.lfoot { height: 21px; display: flex; align-items: center; padding: 0 2px 4px 45px; justify-content: space-between; }
.fx { font: italic bold 14px/14px "Liberation Serif", serif; color: #666; }
.resize { width: 10px; height: 10px; align-self: flex-end; background: conic-gradient(#999 25%, transparent 0) 0 0 / 2px 2px; clip-path: polygon(100% 0, 100% 100%, 0 100%); }
.speed { position: absolute; right: -30px; top: 221px; width: 46px; height: 46px; border-radius: 50%; border: 3px solid #ddd;
  background: radial-gradient(circle at 50% 20%, #73dc82, #37b551 60%); color: #fff; font-weight: bold; line-height: 40px; box-shadow: 0 0 3px #444; }

/* taskbar */
.taskbar { height: 40px; flex: none; display: flex; align-items: center; position: relative; border-top: 1px solid #a68b78;
  color: #fff; padding-left: 8px;
  background: radial-gradient(ellipse 9px 28px at 680px 12px, #5a4630, transparent), radial-gradient(ellipse 10px 40px at 710px 16px, #4a3925, transparent),
   radial-gradient(ellipse 11px 44px at 742px 24px, #4a3925, transparent), radial-gradient(ellipse 11px 44px at 780px 22px, #4a3925, transparent),
   radial-gradient(ellipse 12px 44px at 824px 28px, #4a3925, transparent),
   linear-gradient(90deg, #8b6847, #85643f 35%, #765a3d 48%, #71573b 60%, #5a4229 68%, #553e26 80%, #473625); }
.start { width: 38px; height: 38px; }
.quick { margin: 0 19px 0 23px; }
.dots { width: 9px; height: 30px; margin-right: 8px; background: conic-gradient(#3c2e20 25%, transparent 0) 0 0 / 3px 4px; }
.task { width: 159px; height: 38px; margin-right: 3px; padding-left: 9px; gap: 3px; justify-content: flex-start; border: 1px solid #57412d; border-radius: 2px;
  background: linear-gradient(165deg, #b9a594, #94795f 45%, #846547 50%, #977b5d); box-shadow: inset 0 0 0 1px #c8b6a5; text-shadow: 0 1px 2px #222; }
.task.lit { background: linear-gradient(165deg, #e0d5ce, #bba797 45%, #a08467 50%, #c2b2a2); gap: 5px; }
.psicon { width: 30px; height: 29px; background: linear-gradient(150deg, #0b74b9, #003872); color: #50c9f8; font: bold 19px/27px "Open Sans", sans-serif; text-shadow: none; }
.tray { margin-left: auto; display: flex; align-items: center; gap: 8px; height: 38px; }
.clock { text-align: center; line-height: 18px; margin-left: 10px; width: 62px; white-space: nowrap; text-shadow: 0 1px 2px #000; z-index: 1; }
.peek { width: 14px; height: 38px; border: 1px solid #988270; background: linear-gradient(135deg, #96816e, #54402c); }
.mark { position: absolute; right: 14px; top: -23px; display: flex; pointer-events: none; }
.mark b { display: block; font: bold 32px/34px "Noto Sans CJK SC", sans-serif; color: #6d75f2; opacity: .6; }
.mark span { display: block; font: bold 21px/20px "Liberation Serif", serif; color: #c22; opacity: .6; }
```
